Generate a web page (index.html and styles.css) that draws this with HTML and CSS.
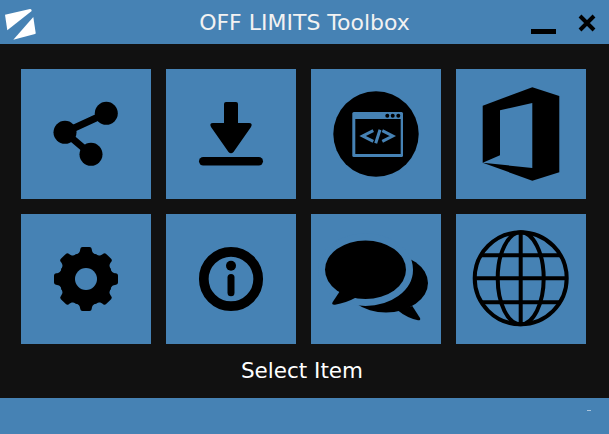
FILE: index.html
```html
<!DOCTYPE html>
<html lang="en">
<head>
    <meta charset="UTF-8">
    <title>OFF LIMITS Toolbox</title>
    <link rel="stylesheet" href="styles.css">
</head>
<body>
    <div class="window">
        <div class="titlebar">
            <svg class="logo" viewBox="0 0 40 40">
                <path class="white" d="M5 11.7 L30 6 Q31.7 5.8 31.7 8 L7.3 27.3 Z"/>
                <path class="white" d="M33.3 14 L35.7 30 Q35.7 30.8 35 31 L13.3 36.7 Z"/>
            </svg>
            <div class="title">OFF LIMITS Toolbox</div>
            <div class="controls">
                <div class="min-btn"></div>
                <svg class="close-btn" viewBox="0 0 18 18">
                    <path class="stroke" d="M2 2 L16 16 M16 2 L2 16"/>
                </svg>
            </div>
        </div>

        <div class="content">
            <div class="grid">
                <!-- share -->
                <div class="tile">
                    <svg viewBox="0 0 130 130">
                        <path class="line" d="M44 63.3 L85.3 44.3 M44 63.3 L70 85.3"/>
                        <circle cx="44" cy="63.3" r="11.5"/>
                        <circle cx="85.3" cy="44.3" r="11.5"/>
                        <circle cx="70" cy="85.3" r="11.5"/>
                    </svg>
                </div>
                <!-- download -->
                <div class="tile">
                    <svg viewBox="0 0 130 130">
                        <path d="M60 33 H70 Q72 33 72 35 V54 H83 Q87 54 85 58 L67.5 83 Q65 85.5 62.5 83 L45 58 Q43 54 47 54 H58 V35 Q58 33 60 33 Z"/>
                        <rect x="33" y="88" width="64" height="8.4" rx="4.2"/>
                    </svg>
                </div>
                <!-- code window -->
                <div class="tile">
                    <svg viewBox="0 0 130 130">
                        <circle cx="65" cy="65" r="42.7"/>
                        <rect class="blue" x="41.3" y="43" width="50.7" height="45" rx="1.5"/>
                        <rect x="44.3" y="50" width="45.4" height="35"/>
                        <circle cx="76.3" cy="46.7" r="2"/>
                        <circle cx="81.7" cy="46.7" r="2"/>
                        <circle cx="87.3" cy="46.7" r="2"/>
                        <path class="code" d="M62.3 61.7 L51.7 67 L62.3 72.3 M71.3 61.7 L81.7 67 L71.3 72.3 M69 60.7 L64.7 74.3"/>
                    </svg>
                </div>
                <!-- office -->
                <div class="tile">
                    <svg viewBox="0 0 130 130">
                        <path d="M26.7 36.7 L76.3 18.3 L103.3 27 V103.3 L76.3 111.7 L26.7 93.7 Z"/>
                        <path class="blue" d="M44 41.3 L76.3 34 V99 L26.7 93.7 L44 86.3 Z"/>
                    </svg>
                </div>
                <!-- settings -->
                <div class="tile">
                    <svg viewBox="0 0 130 130">
                        <g transform="translate(65 65)">
                            <circle r="26.5"/>
                            <path id="tooth" d="M-11.5 -24 C-7 -25 -6 -27 -5.7 -30 Q-5.5 -32 -3.5 -32 H3.5 Q5.5 -32 5.7 -30 C6 -27 7 -25 11.5 -24 Z"/>
                            <use href="#tooth" transform="rotate(45)"/>
                            <use href="#tooth" transform="rotate(90)"/>
                            <use href="#tooth" transform="rotate(135)"/>
                            <use href="#tooth" transform="rotate(180)"/>
                            <use href="#tooth" transform="rotate(225)"/>
                            <use href="#tooth" transform="rotate(270)"/>
                            <use href="#tooth" transform="rotate(315)"/>
                            <circle class="blue" r="11"/>
                        </g>
                    </svg>
                </div>
                <!-- info -->
                <div class="tile">
                    <svg viewBox="0 0 130 130">
                        <circle class="ring" cx="65" cy="65" r="27.2"/>
                        <circle cx="65" cy="51.7" r="5"/>
                        <rect x="61.5" y="60" width="7" height="22.3" rx="3.5"/>
                    </svg>
                </div>
                <!-- chat -->
                <div class="tile">
                    <svg viewBox="0 0 130 130">
                        <ellipse cx="75" cy="69" rx="42" ry="29.5"/>
                        <path d="M101.3 92 L109 104 Q110 106.5 107 106.3 Q96 104 86.3 96 Z"/>
                        <ellipse class="halo" cx="54.5" cy="55.7" rx="40.5" ry="29.3"/>
                        <path d="M29 77 L21.7 88 Q20 91 24 90.7 Q35 89 46 83 Z"/>
                    </svg>
                </div>
                <!-- globe -->
                <div class="tile">
                    <svg viewBox="0 0 130 130">
                        <g class="globe">
                            <circle cx="64.7" cy="64.3" r="46"/>
                            <ellipse cx="64.7" cy="64.3" rx="23" ry="46"/>
                            <path d="M64.7 18.3 V110.3 M18.7 64.3 H110.7 M25 41.3 H104.4 M25 88.3 H104.4"/>
                        </g>
                    </svg>
                </div>
            </div>
            <div class="status">Select Item</div>
        </div>

        <div class="footer">
            <span class="footer-mark"></span>
        </div>
    </div>
</body>
</html>
```

FILE: styles.css
```css
html, body {
    margin: 0;
    padding: 0;
}
body {
    font-family: 'DejaVu Sans', Verdana, sans-serif;
    background-color: #111111;
}
.window {
    width: 609px;
    height: 434px;
    display: flex;
    flex-direction: column;
    overflow: hidden;
}
.titlebar {
    height: 44px;
    flex-shrink: 0;
    background-color: #4682b4;
    display: grid;
    grid-template-columns: 1fr auto 1fr;
    align-items: center;
}
.logo {
    width: 40px;
    height: 40px;
    display: block;
    margin-top: 1px;
}
.white {
    fill: #ffffff;
}
.title {
    color: #f2f2f2;
    font-size: 22px;
    line-height: 44px;
    margin-top: 1px;
}
.controls {
    align-self: start;
    display: flex;
    justify-content: flex-end;
    align-items: flex-start;
    padding-top: 14px;
    padding-right: 13px;
}
.min-btn {
    width: 25px;
    height: 5px;
    background-color: #000000;
    margin-top: 15px;
    margin-right: 22px;
}
.close-btn {
    width: 18px;
    height: 18px;
    display: block;
}
.stroke {
    fill: none;
    stroke: #000000;
    stroke-width: 4;
}
.content {
    flex: 1;
    background-color: #111111;
    padding: 25px 0 0 21px;
    display: flex;
    flex-direction: column;
}
.grid {
    display: grid;
    grid-template-columns: repeat(4, 130px);
    grid-auto-rows: 130px;
    gap: 15px;
}
.tile {
    background-color: #4682b4;
}
.tile svg {
    display: block;
    width: 130px;
    height: 130px;
    fill: #000000;
}
.tile svg .blue {
    fill: #4682b4;
}
.line {
    fill: none;
    stroke: #000000;
    stroke-width: 7;
}
.code {
    fill: none;
    stroke: #4682b4;
    stroke-width: 3;
}
.ring {
    fill: none;
    stroke: #000000;
    stroke-width: 9.7;
}
.halo {
    stroke: #4682b4;
    stroke-width: 14;
    paint-order: stroke;
}
.globe {
    fill: none;
    stroke: #000000;
    stroke-width: 4;
}
.status {
    color: #ffffff;
    font-size: 21.5px;
    line-height: 54px;
    text-align: center;
    margin-left: -21px;
    margin-right: 5px;
}
.footer {
    height: 36px;
    flex-shrink: 0;
    background-color: #4682b4;
    display: flex;
    justify-content: flex-end;
    padding-top: 12px;
    padding-right: 18px;
    box-sizing: border-box;
}
.footer-mark {
    width: 4px;
    height: 1px;
    background-color: #a9c4dc;
}
```
